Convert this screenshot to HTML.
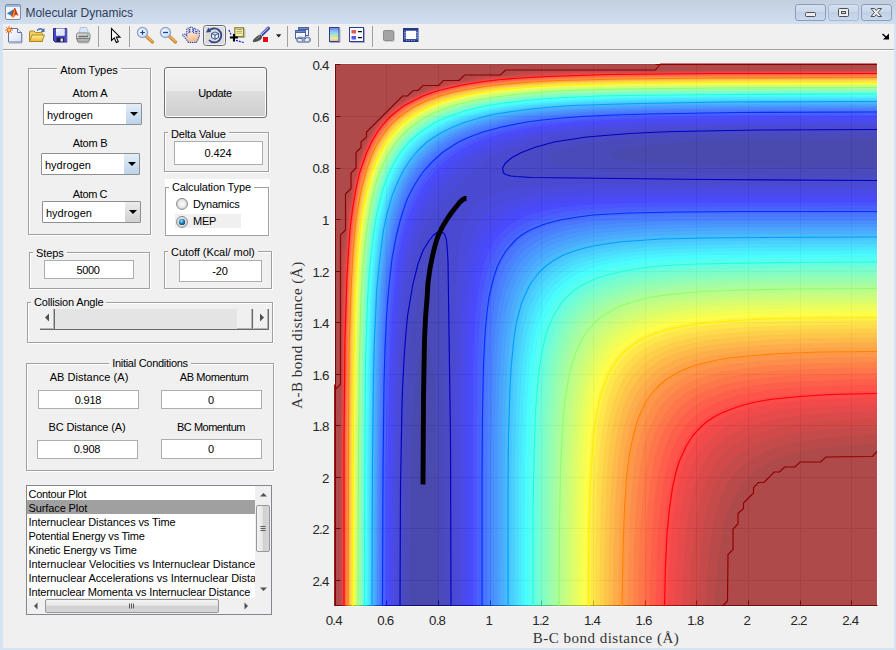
<!DOCTYPE html>
<html><head><meta charset="utf-8"><title>Molecular Dynamics</title>
<style>
html,body{margin:0;padding:0;}
body{width:896px;height:650px;overflow:hidden;background:#d6e3f3;position:relative;font-family:"Liberation Sans",sans-serif;font-size:11px;color:#000;}
.abs,.abs *{position:absolute;}
#win{position:absolute;left:0;top:0;width:896px;height:650px;overflow:hidden;}
#titlebar{position:absolute;left:0;top:0;width:896px;height:24px;background:linear-gradient(#c2cfdf,#d0def0);}
#title{position:absolute;left:25.5px;top:5px;font-size:12px;line-height:16px;color:#2f3d5c;white-space:nowrap;letter-spacing:-0.03px;}
#client{position:absolute;left:3px;top:24px;width:891px;height:624px;background:#f0f0f0;}
.t{position:absolute;white-space:nowrap;line-height:13px;height:13px;font-size:11px;}
.c{text-align:center;}
.panel{position:absolute;border:1px solid #a0a0a0;box-shadow:1px 1px 0 #fff, inset 1px 1px 0 #fff;box-sizing:border-box;}
.pt{position:absolute;background:#f0f0f0;padding:0 3px;white-space:nowrap;line-height:13px;height:13px;top:-8px;}
.edit{position:absolute;box-sizing:border-box;border:1px solid #abadb3;background:#fff;text-align:center;font-size:11px;}
.combo{position:absolute;box-sizing:border-box;border:1px solid #8e8f8f;background:#fff;border-radius:1px;}
.combo .cb{position:absolute;right:0;top:0;bottom:0;width:15px;background:linear-gradient(#e4eef8,#bcd3ea);}
.combo .cb.g{background:linear-gradient(#ececec,#d0d0d0);}
.combo .cb:after{content:"";position:absolute;left:3.5px;top:8px;border-left:4px solid transparent;border-right:4px solid transparent;border-top:4.5px solid #000;}
.combo span{position:absolute;left:3px;top:5px;line-height:13px;}
.sep{position:absolute;top:2px;width:1px;height:21px;background:#a0a0a0;}
</style></head><body>
<div id="win">
<div id="titlebar">
<svg style="position:absolute;left:4px;top:3px" width="18" height="18" viewBox="0 0 18 18">
<rect x="1.5" y="1.5" width="15" height="15" rx="1.5" fill="#f4f4f4" stroke="#7f8a9a"/>
<rect x="2" y="2" width="14" height="2" fill="#8fbce6"/>
<path d="M3 10.5 L9 6.5 L10.5 9 L7 12.5 Z" fill="#3a7bc0"/>
<path d="M7 12.5 L10.3 5 L11.2 5 L14.5 13 L12 11.5 L9.5 14.5 L8 14 Z" fill="#c8321e"/>
<path d="M8 14 L10.6 6 L11 9 L10.2 13.8 Z" fill="#f0a020"/>
</svg>
<div id="title">Molecular Dynamics</div>
<!-- window buttons -->
<svg style="position:absolute;left:794px;top:3px" width="100" height="19" viewBox="0 0 100 19">
<defs><linearGradient id="wb" x1="0" y1="0" x2="0" y2="1"><stop offset="0" stop-color="#d5e1f0"/><stop offset="0.45" stop-color="#cad8ea"/><stop offset="0.5" stop-color="#bfd0e6"/><stop offset="1" stop-color="#cbdaee"/></linearGradient></defs>
<rect x="1.5" y="1.5" width="30" height="16" rx="2.5" fill="url(#wb)" stroke="#8a9dbd"/>
<rect x="34.5" y="1.5" width="30" height="16" rx="2.5" fill="url(#wb)" stroke="#a9b9d2"/>
<rect x="67.5" y="1.5" width="30" height="16" rx="2.5" fill="url(#wb)" stroke="#8a9dbd"/>
<rect x="11.5" y="9.5" width="10" height="4" rx="1" fill="#ececec" stroke="#4d4f58"/>
<rect x="44.5" y="5.5" width="10" height="8" rx="1" fill="#ececec" stroke="#4d4f58"/>
<rect x="47.5" y="8.5" width="4" height="2" fill="#c8d6ea" stroke="#4d4f58"/>
<path d="M77 5.500h3.600l1.650 2 1.650-2h3.600l-3.400 4 3.400 4h-3.600l-1.650-2-1.650 2h-3.600l3.400-4z" fill="#f0f0f0" stroke="#4d4f58" stroke-width="1" stroke-linejoin="round"/>
</svg>
</div>
<div id="client">
<!-- toolbar -->
<div id="toolbar" style="position:absolute;left:0;top:0;width:891px;height:25px;border-bottom:1px solid #a0a0a0;box-shadow:0 1px 0 #fff;">
<svg style="position:absolute;left:-3px;top:-24px" width="896" height="52" viewBox="0 0 896 52">
<defs>
<linearGradient id="pg" x1="0" y1="0" x2="1" y2="1"><stop offset="0" stop-color="#ffffff"/><stop offset="1" stop-color="#d6e2f6"/></linearGradient>
<linearGradient id="fo" x1="0" y1="0" x2="0" y2="1"><stop offset="0" stop-color="#fff0a0"/><stop offset="1" stop-color="#e8b830"/></linearGradient>
<linearGradient id="cbar" x1="0" y1="0" x2="0" y2="1"><stop offset="0" stop-color="#6c7ce8"/><stop offset="0.35" stop-color="#8fd0f0"/><stop offset="0.6" stop-color="#b8e8b0"/><stop offset="0.8" stop-color="#f6e8a0"/><stop offset="1" stop-color="#f0a890"/></linearGradient>
<linearGradient id="lens" x1="0" y1="0" x2="1" y2="1"><stop offset="0" stop-color="#ffffff"/><stop offset="1" stop-color="#b8e4f4"/></linearGradient>
<linearGradient id="hnd" x1="0" y1="0" x2="0.3" y2="1"><stop offset="0" stop-color="#fff0e0"/><stop offset="0.6" stop-color="#fadcc0"/><stop offset="1" stop-color="#eebb90"/></linearGradient>
</defs>
<!-- new -->
<path d="M8.500 28.500h9l4 4v9.500h-13z" fill="url(#pg)" stroke="#6272a8" stroke-width="1"/>
<path d="M17.500 28.500v4h4" fill="#e8eefa" stroke="#6272a8" stroke-width="1"/>
<path d="M9 43h13v-9" fill="none" stroke="#9aa4c8" stroke-width="1"/>
<circle cx="9" cy="30" r="2.200" fill="#f08030"/>
<path d="M9 26v8M5 30h8M6.200 27.200l5.600 5.600M11.800 27.200l-5.600 5.600" stroke="#e86a28" stroke-width="1"/>
<circle cx="9" cy="30" r="1.200" fill="#ffd060"/>
<!-- open -->
<path d="M29.500 41.500v-9.500q0-1 1-1h3.500l1.500 1.500h6q1 0 1 1v8z" fill="#f0d060" stroke="#b08a20"/>
<path d="M29.500 41.500l2.500-6.500h12.500l-2.500 6.500z" fill="url(#fo)" stroke="#b08a20"/>
<path d="M37 30.500q3.500-3.500 6.500 0" fill="none" stroke="#4a6ab0" stroke-width="1.300"/>
<path d="M44.500 28v4h-4z" fill="#4a6ab0"/>
<!-- save -->
<path d="M53.500 28.500h13v13.500h-11.500l-1.500-1.500z" fill="#4a48c8" stroke="#2c2a80"/>
<rect x="56" y="28.500" width="8.500" height="7" fill="#f4f6fc"/>
<path d="M56 32l8.500-3.500v7h-8.500z" fill="#dfe6f6"/>
<rect x="56.500" y="37.500" width="7.500" height="4.500" fill="#1c1c50"/>
<rect x="60.500" y="38.500" width="2.500" height="3" fill="#d8d8e8"/>
<path d="M67 29v13.500h-12" fill="none" stroke="#8a88c8" stroke-width="1"/>
<!-- print -->
<path d="M79 33l1.500-5.500h6l2 5.500z" fill="#d6e8fa" stroke="#a8b8d0" stroke-width="0.800"/>
<path d="M76.500 34.500q0-1.500 1.500-1.500h10.500q1.500 0 1.500 1.500v4h-13.500z" fill="#d4d4d4" stroke="#8a8a8a"/>
<path d="M76.500 38.500h13.500l-1.500 3.500h-10.500z" fill="#b4b4b4" stroke="#808080"/>
<path d="M78.500 36.500h9.500" stroke="#707070" stroke-width="1.600"/>
<rect x="87" y="34.300" width="1.600" height="1.200" fill="#40c040"/>
<path d="M78.500 42.800h10" stroke="#a0a0a0"/>
<!-- seps -->
<path d="M98.500 26v21M129.500 26v21M287.500 26v21M318.500 26v21M372.500 26v21" stroke="#a0a0a0" stroke-width="1"/>
<!-- cursor -->
<path d="M111.500 28.500v12l2.800-2.600 2 4.600 2-0.900-2-4.500h3.700z" fill="#fff" stroke="#000" stroke-width="1.100" stroke-linejoin="miter"/>
<!-- zoom in -->
<path d="M146.500 36.500l6 5.500" stroke="#c88430" stroke-width="3.200" stroke-linecap="round"/>
<path d="M146.500 36.200l6 5.300" stroke="#f4b860" stroke-width="1.400" stroke-linecap="round"/>
<circle cx="142.500" cy="32.500" r="5" fill="url(#lens)" stroke="#96a2d4" stroke-width="1.400"/>
<path d="M140.200 32.500h4.600M142.500 30.200v4.600" stroke="#2a3a8a" stroke-width="1.200"/>
<!-- zoom out -->
<path d="M169.500 36.500l6 5.500" stroke="#c88430" stroke-width="3.200" stroke-linecap="round"/>
<path d="M169.500 36.200l6 5.300" stroke="#f4b860" stroke-width="1.400" stroke-linecap="round"/>
<circle cx="165.500" cy="32.500" r="5" fill="url(#lens)" stroke="#96a2d4" stroke-width="1.400"/>
<path d="M163 32.500h5" stroke="#2a3a8a" stroke-width="1.300"/>
<!-- hand -->
<path d="M188.500 42.500l-2.300-3.300-3.200-3.700q-0.500-1.300 0.800-1.600l1.600 0.400 1.400 1.400v-6.700q1.100-1.700 2.300 0v3.700h0.700v-4.900q1.500-1.800 3 0v4.900h0.700v-3.700q1.200-1.500 2.300 0v4.300h1v-2.500q1.300-1.500 2.500 0v5.500l-1.500 3.700-1.500 2.500z" fill="url(#hnd)" stroke="#2446c8" stroke-width="1.100" stroke-dasharray="1.400 0.800"/>
<!-- rotate button -->
<rect x="203.500" y="25.500" width="22" height="20" rx="3" fill="#dcdcdc" stroke="#6a6a6a"/>
<rect x="204.500" y="26.500" width="20" height="18" rx="2" fill="none" stroke="#f4f4f4" stroke-width="0.800"/>
<path d="M208.500 31.500a7 7 0 1 1 0.500 8.500" fill="none" stroke="#2c4684" stroke-width="1.800"/>
<path d="M206 32.500l2.500-5 2.500 4.500z" fill="#2c4684"/>
<path d="M211.500 33.500l3.500-1.500 3.500 1.500v4l-3.500 1.800-3.500-1.800z" fill="#e8eef8" stroke="#2c4684" stroke-width="0.900"/>
<path d="M211.500 33.500l3.500 1.500 3.500-1.500M215 35v4.300" fill="none" stroke="#2c4684" stroke-width="0.900"/>
<!-- data cursor -->
<path d="M228.900 30l2.600 5.600M236 40.400l8 2.200" fill="none" stroke="#1818f0" stroke-width="1.200" stroke-dasharray="2 1"/>
<path d="M244.800 28.500v9h-9.500" fill="none" stroke="#b0b0b0" stroke-width="1"/>
<rect x="234.800" y="27.800" width="8.700" height="8.700" fill="#fbf8c8" stroke="#8a8430" stroke-width="1.300"/>
<path d="M236.500 29.500h5.500M236.500 31.300h5.500M236.500 33.200h5.500" stroke="#a09a48" stroke-width="0.900"/>
<path d="M229.900 37.500h8M234 34v7.500" stroke="#000" stroke-width="2.100"/>
<!-- brush -->
<path d="M268.300 28.200l-7.400 7.400" stroke="#3a4ab0" stroke-width="3.400" stroke-linecap="round"/>
<path d="M267.900 27.900l-6.800 6.800" stroke="#dfe4fa" stroke-width="1" stroke-linecap="round"/>
<path d="M261.300 35.200l-1.300 1.300" stroke="#e8e8ee" stroke-width="3.600"/>
<path d="M260.600 35.300q1.800 1 1.200 2.500q-1.500 3.500-8.700 4q-0.300-1.800 2.400-4q2.600-2.800 5.100-2.500z" fill="#505050" stroke="#303030" stroke-width="0.500"/>
<path d="M256 39.500q2-2.500 4-3" fill="none" stroke="#a0a0a0" stroke-width="0.800"/>
<rect x="262.300" y="36.400" width="6.300" height="6" fill="#fff"/>
<rect x="263" y="37" width="5" height="5" fill="#f00010"/>
<path d="M276 34.200h5.400l-2.700 3.200z" fill="#202020"/>
<!-- link -->
<rect x="298.500" y="27.500" width="10" height="8" fill="#f4f7fc" stroke="#4a62a0"/>
<rect x="298.500" y="27.500" width="10" height="2" fill="#6c8cd0" stroke="#4a62a0"/>
<rect x="295.500" y="30.500" width="10" height="8" fill="#f4f7fc" stroke="#4a62a0"/>
<rect x="295.500" y="30.500" width="10" height="2" fill="#6c8cd0" stroke="#4a62a0"/>
<rect x="297" y="37.500" width="7.500" height="4.500" rx="2.200" fill="none" stroke="#5a6e98" stroke-width="1.600"/>
<rect x="302.500" y="37.500" width="7.500" height="4.500" rx="2.200" fill="none" stroke="#5a6e98" stroke-width="1.600"/>
<rect x="297" y="37.500" width="7.500" height="4.500" rx="2.200" fill="none" stroke="#c4d0e8" stroke-width="0.500"/>
<rect x="302.500" y="37.500" width="7.500" height="4.500" rx="2.200" fill="none" stroke="#c4d0e8" stroke-width="0.500"/>
<!-- colorbar -->
<rect x="329.500" y="27.500" width="9.500" height="14" fill="url(#cbar)" stroke="#2c3c90"/>
<path d="M340 28.500v14h-10" fill="none" stroke="#9098c0" stroke-width="0.800"/>
<!-- legend -->
<rect x="349.500" y="27.500" width="14" height="14" fill="#fbfcff" stroke="#2c3c90"/>
<path d="M364.500 28.500v14h-14" fill="none" stroke="#9098c0" stroke-width="0.800"/>
<rect x="351.500" y="30" width="4.500" height="3.500" fill="#e85858"/>
<rect x="351.500" y="36" width="4.500" height="3.500" fill="#5858e8"/>
<path d="M358 31.700h4M358 37.700h4" stroke="#101010" stroke-width="1.300"/>
<!-- grey square -->
<rect x="383.500" y="30.500" width="10" height="10" rx="1" fill="#a4a4a4" stroke="#8c8c8c"/>
<path d="M394.500 31.500v10h-10" fill="none" stroke="#c4c4c4" stroke-width="0.800"/>
<!-- film -->
<rect x="403.500" y="28.500" width="14.500" height="13" fill="#fdfdff" stroke="#223a8c"/>
<rect x="404" y="28.500" width="14" height="2.200" fill="#223a8c"/>
<rect x="404" y="39" width="14" height="2.500" fill="#223a8c"/>
<rect x="404" y="30" width="2" height="10" fill="#4058a8"/>
<rect x="416" y="30" width="2" height="10" fill="#4058a8"/>
<path d="M405 32v1.200M405 34.500v1.200M405 37v1.200M417 32v1.200M417 34.500v1.200M417 37v1.200M406 40.200h1.200M408.500 40.200h1.200M411 40.200h1.200M413.500 40.200h1.200" stroke="#e8ecf8" stroke-width="0.800"/>
<!-- arrow -->
<path d="M882.500 34l5 4.500" stroke="#000" stroke-width="1.500"/>
<path d="M889 33.500v6h-6z" fill="#000"/>
</svg>

</div>

</div>
<div id="ui" style="position:absolute;left:0;top:0;width:300px;height:650px;">
<!-- Atom Types -->
<div class="panel" style="left:28px;top:68px;width:123px;height:167px;"></div>
<div class="t c" style="left:57px;width:64px;top:64px;background:#f0f0f0;letter-spacing:-0.05px;">Atom Types</div>
<div class="t c" style="left:60px;width:60px;top:87px;letter-spacing:-0.05px;">Atom A</div>
<div class="combo" style="left:43px;top:103px;width:99px;height:22px;"><span>hydrogen</span><div class="cb"></div></div>
<div class="t c" style="left:60px;width:60px;top:137px;letter-spacing:-0.25px;">Atom B</div>
<div class="combo" style="left:41px;top:153px;width:99px;height:22px;"><span>hydrogen</span><div class="cb"></div></div>
<div class="t c" style="left:60px;width:60px;top:188px;letter-spacing:-0.40px;">Atom C</div>
<div class="combo" style="left:42px;top:201px;width:99px;height:22px;"><span>hydrogen</span><div class="cb g"></div></div>
<!-- Update -->
<div style="position:absolute;left:164px;top:67px;width:103px;height:51px;box-sizing:border-box;border:1px solid #707070;border-radius:3px;background:linear-gradient(#f2f2f2 0,#ebebeb 47%,#dddddd 47%,#cfcfcf 100%);box-shadow:inset 0 0 0 1px #fcfcfc;"></div>
<div class="t c" style="left:185px;width:60px;top:87px;letter-spacing:-0.33px;">Update</div>
<!-- Delta Value -->
<div class="panel" style="left:164px;top:132px;width:105px;height:40px;"></div>
<div class="t" style="left:168px;top:128px;background:#f0f0f0;padding:0 3px;letter-spacing:-0.13px;">Delta Value</div>
<div class="edit" style="left:174px;top:141px;width:89px;height:24px;"></div>
<div class="t c" style="left:188px;width:60px;top:147px;letter-spacing:-0.14px;">0.424</div>
<!-- Calculation Type -->
<div style="position:absolute;left:165px;top:179px;width:105px;height:57px;background:#fff;"></div>
<div class="panel" style="left:165px;top:187px;width:104px;height:49px;box-shadow:none;border-color:#a0a0a0;"></div>
<div class="t" style="left:169px;top:181px;background:#fff;padding:0 3px;letter-spacing:-0.14px;">Calculation Type</div>
<div style="position:absolute;left:175px;top:214px;width:66px;height:14px;background:#f0f0f0;"></div>
<svg style="position:absolute;left:175px;top:196px" width="16" height="34" viewBox="0 0 16 34">
<defs><radialGradient id="rb" cx="0.5" cy="0.5" r="0.5"><stop offset="0" stop-color="#fdfdfd"/><stop offset="0.6" stop-color="#ececec"/><stop offset="1" stop-color="#c9c9c9"/></radialGradient>
<radialGradient id="rd" cx="0.4" cy="0.35" r="0.7"><stop offset="0" stop-color="#b9e4f7"/><stop offset="0.45" stop-color="#2a8cc4"/><stop offset="1" stop-color="#0c3f6a"/></radialGradient></defs>
<circle cx="7" cy="7.9" r="5.5" fill="url(#rb)" stroke="#8e8f8f"/>
<circle cx="7" cy="25.900" r="5.5" fill="url(#rb)" stroke="#8e8f8f"/>
<circle cx="7" cy="25.900" r="3.2" fill="url(#rd)"/>
</svg>
<div class="t" style="left:193px;top:198px;letter-spacing:-0.22px;">Dynamics</div>
<div class="t" style="left:193px;top:215px;letter-spacing:-0.27px;">MEP</div>
<!-- Cutoff -->
<div class="panel" style="left:164px;top:251px;width:108px;height:38px;"></div>
<div class="t" style="left:168px;top:246px;background:#f0f0f0;padding:0 3px;letter-spacing:-0.06px;">Cutoff (Kcal/ mol)</div>
<div class="edit" style="left:179px;top:260px;width:83px;height:22px;"></div>
<div class="t c" style="left:190px;width:60px;top:265px;letter-spacing:-0.10px;">-20</div>
<!-- Steps -->
<div class="panel" style="left:29px;top:252px;width:121px;height:37px;"></div>
<div class="t" style="left:33px;top:247px;background:#f0f0f0;padding:0 3px;letter-spacing:-0.10px;">Steps</div>
<div class="edit" style="left:44px;top:260px;width:90px;height:19px;"></div>
<div class="t c" style="left:58px;width:60px;top:264px;letter-spacing:-0.38px;">5000</div>
<!-- Collision Angle -->
<div class="panel" style="left:27px;top:302px;width:246px;height:41px;"></div>
<div class="t" style="left:31px;top:296px;background:#f0f0f0;padding:0 3px;letter-spacing:-0.18px;">Collision Angle</div>
<div style="position:absolute;left:40px;top:309px;width:229px;height:20px;background:#e4e4e4;border-bottom:1px solid #696969;"></div>
<div style="position:absolute;left:40px;top:309px;width:15px;height:21px;background:#f0f0f0;box-shadow:inset -1px -1px 0 #696969,inset -2px -2px 0 #b4b4b4;"></div>
<div style="position:absolute;left:237px;top:309px;width:16px;height:21px;background:#f0f0f0;box-shadow:inset -1px -1px 0 #696969,inset -2px -2px 0 #b4b4b4;"></div>
<div style="position:absolute;left:254px;top:309px;width:15px;height:21px;background:#f0f0f0;box-shadow:inset -1px -1px 0 #696969,inset -2px -2px 0 #b4b4b4;"></div>
<svg style="position:absolute;left:40px;top:309px" width="230" height="21"><path d="M5 8.500 l4-4 v8z" fill="#505050"/><path d="M224 8.500 l-4-4 v8z" fill="#505050"/></svg>
<!-- Initial Conditions -->
<div class="panel" style="left:26px;top:363px;width:248px;height:108px;"></div>
<div class="t c" style="left:109px;width:82px;top:357px;background:#f0f0f0;letter-spacing:-0.28px;">Initial Conditions</div>
<div class="t c" style="left:39px;width:100px;top:371px;letter-spacing:0.03px;">AB Distance (A)</div>
<div class="edit" style="left:38px;top:390px;width:101px;height:19px;"></div>
<div class="t c" style="left:58px;width:60px;top:394px;letter-spacing:-0.18px;">0.918</div>
<div class="t c" style="left:37px;width:100px;top:421px;letter-spacing:-0.13px;">BC Distance (A)</div>
<div class="edit" style="left:37px;top:440px;width:101px;height:19px;"></div>
<div class="t c" style="left:57px;width:60px;top:443px;letter-spacing:-0.18px;">0.908</div>
<div class="t c" style="left:164px;width:100px;top:371px;letter-spacing:-0.38px;">AB Momentum</div>
<div class="edit" style="left:161px;top:390px;width:101px;height:19px;"></div>
<div class="t c" style="left:181px;width:60px;top:394px;">0</div>
<div class="t c" style="left:161px;width:100px;top:421px;letter-spacing:-0.49px;">BC Momentum</div>
<div class="edit" style="left:161px;top:439px;width:101px;height:20px;"></div>
<div class="t c" style="left:181px;width:60px;top:443px;">0</div>
<!-- Listbox -->
<div style="position:absolute;left:26px;top:485px;width:246px;height:130px;box-sizing:border-box;border:1px solid #828790;background:#fff;overflow:hidden;">
 <div style="position:absolute;left:0;top:0;width:228px;height:112px;overflow:hidden;">
  <div style="position:absolute;left:0;top:14px;width:228px;height:14px;background:#a0a0a0;"></div>
  <div class="t" style="left:1.5px;top:2px;letter-spacing:-0.29px;">Contour Plot</div>
  <div class="t" style="left:1.5px;top:16px;letter-spacing:-0.11px;">Surface Plot</div>
  <div class="t" style="left:1.5px;top:30px;letter-spacing:-0.11px;">Internuclear Distances vs Time</div>
  <div class="t" style="left:1.5px;top:44px;letter-spacing:-0.23px;">Potential Energy vs Time</div>
  <div class="t" style="left:1.5px;top:58px;letter-spacing:-0.17px;">Kinetic Energy vs Time</div>
  <div class="t" style="left:1.5px;top:72px;letter-spacing:-0.04px;">Internuclear Velocities vs Internuclear Distance</div>
  <div class="t" style="left:1.5px;top:86px;letter-spacing:-0.05px;">Internuclear Accelerations vs Internuclear Distance</div>
  <div class="t" style="left:1.5px;top:100px;letter-spacing:-0.14px;">Internuclear Momenta vs Internuclear Distance</div>
 </div>
 <!-- v scrollbar -->
 <div style="position:absolute;left:228px;top:0;width:16px;height:112px;background:#f0f0f0;"></div>
 <div style="position:absolute;left:229px;top:19px;width:14px;height:47px;box-sizing:border-box;border:1px solid #979797;border-radius:2px;background:linear-gradient(90deg,#f3f3f3,#e6e6e6 45%,#d0d0d0 50%,#d6d6d6);"></div>
 <svg style="position:absolute;left:228px;top:0" width="16" height="112"><path d="M5 10.500 l3.500-3.500 3.500 3.500z" fill="#505050"/><path d="M5 101.500 l3.500 3.500 3.500-3.500z" fill="#505050"/><path d="M5.500 40.500h5M5.500 42.500h5M5.500 44.500h5" stroke="#5a5a5a" stroke-width="1"/></svg>
 <!-- h scrollbar -->
 <div style="position:absolute;left:0;top:112px;width:244px;height:16px;background:#f0f0f0;"></div>
 <div style="position:absolute;left:18px;top:113px;width:174px;height:14px;box-sizing:border-box;border:1px solid #979797;border-radius:2px;background:linear-gradient(#f3f3f3,#e6e6e6 45%,#d0d0d0 50%,#d6d6d6);"></div>
 <svg style="position:absolute;left:0;top:112px" width="244" height="16"><path d="M10.500 4.500 l-3.500 3.500 3.500 3.500z" fill="#505050"/><path d="M217.500 4.500 l3.500 3.500 -3.500 3.500z" fill="#505050"/><path d="M102.500 5.500v5M104.500 5.500v5M106.500 5.500v5" stroke="#5a5a5a" stroke-width="1"/></svg>
</div>
</div>
<svg style="position:absolute;left:0;top:0" width="896" height="650" viewBox="0 0 896 650">
<rect x="334" y="63" width="544" height="544" fill="#fafafa"/>
<path d="M335.5 65v542M335 64.5h542M386.5 65v542M335 116.5h542M438.5 65v542M335 168.5h542M490.5 65v542M335 219.5h542M541.5 65v542M335 271.5h542M593.5 65v542M335 322.5h542M645.5 65v542M335 374.5h542M696.5 65v542M335 425.5h542M748.5 65v542M335 477.5h542M800.5 65v542M335 528.5h542M851.5 65v542M335 580.5h542" stroke="#dedede" stroke-width="1" fill="none"/>
<path d="M335.5 64v541.5h542M335.5 606v-5.5M335 64.5h5.5M386.5 606v-5.5M335 116.5h5.5M438.5 606v-5.5M335 168.5h5.5M490.5 606v-5.5M335 219.5h5.5M541.5 606v-5.5M335 271.5h5.5M593.5 606v-5.5M335 322.5h5.5M645.5 606v-5.5M335 374.5h5.5M696.5 606v-5.5M335 425.5h5.5M748.5 606v-5.5M335 477.5h5.5M800.5 606v-5.5M335 528.5h5.5M851.5 606v-5.5M335 580.5h5.5" stroke="#262626" stroke-width="1" fill="none"/>
<g opacity="0.7">
<rect x="335" y="64" width="542" height="542" fill="#00008f"/>
<path fill="#00009f" d="M335 64h542v74.5l-113 1.5l-46.5 1l-35.5 1l-26.5 2.5l-27.5 3l-18.5 5l1.5 5l18.5 3.5l14.5 2l6.5 0.5l41 1.5l46.5 1.5l139 1.5v438h-438.5l-0.5-77l-1-62l-1.5-46.5l-1.5-41l-0.5-6.5l-2-14l-3-19l-5.5-1.5l-5 19l-3 27l-2 26.5l-1.5 35.5l-1 46.5l-1 113h-74.5z"/>
<path fill="#0000af" d="M335 64h542v69.5l-144 1l-51.5 1.5l-36.5 1.5l-25.5 2l-25.5 2.5l-26.5 5.5l-14.5 5l-7 5l1 5.5l10.5 3.5l8.5 1.5l7 0.5l31 2.5l41 1.5l52 1l77 1l103 0.5v431h-431.5l-0.5-103l-1-77l-1-51.5l-1.5-41.5l-2-31l-1-7l-1.5-8.5l-3.5-10.5l-5-1l-5.5 7.5l-5 14.5l-5 26.5l-3 25l-2 26l-1.5 36l-1.5 51.5l-1 144h-69z"/>
<path fill="#0000bf" d="M335 64h542v65.5l-118.5 0.5l-82.5 1.5l-46.5 2l-42.5 3.5l-32.5 5l-19.5 5.5l-13.5 5l-9 5l-6.5 5.5l-3.5 5l1.5 5l1.5 1l5.5 1.5l5 1l15.5 1l170.5 2l175 1v425.5h-426l-1-175l-2-170l-1-15.5l-1-5.5l-1.5-5l-1-1.5l-5-1.5l-5 3.5l-5 6l-5.5 9.5l-5 13l-5 19.5l-5.5 32.5l-3.5 43l-2 46l-1.5 82.5l-0.5 118.5h-65z"/>
<path fill="#0000cf" d="M335 64h542v62l-123.5 0.5l-67 1l-36 1.5l-31 1.5l-24.5 1.5l-17 2l-24.5 3l-6.5 1.5l-17.5 3.5l-16.5 5.5l-12.5 5l-9.5 5l-7.5 5.5l-12.5 10l-27.5 27.5l-10 12.5l-5 7.5l-5.5 9.5l-5 12l-5 16.5l-5.5 24l-2.5 19.5l-2.5 22.5l-2 29l-1.5 36l-1.5 77.5l-1 139h-61.5zM519.5 188.5l12-1.5l15.5-1l20.5-1l26-0.5l283.5 1v420.5h-421l-1-283.5l0.5-25.5l1-20.5l1-15.5l2-15.5l3.5-15.5l3.5-10.5l3-5l3-5l5-5.5l2.5-2l5-3.5l5-2.5l5.5-2l10-3z"/>
<path fill="#0000df" d="M335 64h542v59.5l-133.5 0.5l-83 1.5l-46.5 2l-25.5 1.5l-27.5 3l-30.5 5l-19.5 5l-14 5.5l-11.5 5l-9 5l-7.5 5.5l-13 10l-12.5 12.5l-10 13l-5 7.5l-5.5 9l-5 11l-5 14.5l-5.5 19.5l-5 30.5l-3 27l-1.5 26l-2 46l-1.5 82.5l-0.5 134h-59zM539 194l13-1.5l21-1.5l46.5-1.5l257.5 0.5v416h-416l-1-206l0.5-62l0.5-25.5l1-20.5l2-21l2.5-15.5l4-15.5l4-10.5l3-5l3.5-5l4.5-5l4.5-4l5.5-3.5l5-3l10.5-4l15.5-4z"/>
<path fill="#0000ef" d="M335 64h542v57l-128.5 0.5l-72.5 1l-62 2l-31 2l-15.5 1.5l-25.5 3.5l-10.5 1.5l-17.5 4l-17 5l-12.5 5.5l-10.5 5l-9.5 6l-6 4.5l-6.5 5l-8.5 8l-10 12l-5 7l-5.5 8.5l-5 10l-5 13l-5.5 16.5l-5 23l-1.5 10.5l-3 25.5l-1.5 15.5l-1.5 31l-1.5 36l-1.5 77.5l-0.5 144h-56.5zM547 199l15.5-2l20.5-1.5l46.5-1l62-0.5l185.5 0.5v411.5h-412l-0.5-190.5l0.5-67l1-26l1-20.5l2-20.5l2.5-15.5l3.5-15.5l5-12l5-9l3.5-5l5-5l6.5-5l5.5-3.5l10.5-5l15.5-4.5z"/>
<path fill="#0000ff" d="M335 64h542v54.5l-133.5 0.5l-88 1.5l-35 1l-16.5 1l-26 2l-25 2.5l-32 5l-20.5 5l-14.5 5l-12 5.5l-9 5l-11 7.5l-9.5 8l-10 10.5l-7.5 10l-4 6l-5 9l-5 11.5l-5.5 15l-5 20.5l-5 31.5l-2.5 25l-2 26l-1 17l-1 34.5l-1.5 87.5l-0.5 134h-54zM622 199l69.5-1l185.5 0.5v407.5h-408v-195.5v-41.5l1-36l1.5-26l2-20.5l2-10l2-10.5l4.5-15.5l5-10.5l3.5-5l5-6.5l5-5l5.5-4l5-3l10-5l10.5-3.5l10.5-2.5l20.5-3l26-2.5z"/>
<path fill="#0010ff" d="M335 64h542v52.5l-128.5 0.5l-82.5 1l-36.5 1l-31 1.5l-18 1l-23 2.5l-23.5 3l-13 2l-13.5 3l-17.5 5l-13.5 5l-10.5 5.5l-9 5l-7 5l-6.5 5.5l-10 10l-5 6.5l-5.5 7l-4 7.5l-6 12l-5.5 13l-5 18l-5 24l-1.5 10l-2 21l-2 20.5l-1.5 31l-1.5 36l-1.5 87.5l-0.5 139h-52zM600.5 204l34.5-1l46.5-0.5h195.5v403.5h-404v-185.5v-41l1-31l1.5-31l2-20.5l3.5-20.5l4-15.5l4-10.5l3-5l3-5.5l4-5l5-5l6.5-5.5l5.5-3.5l5-2.5l5.5-2.5l10-3.5l15.5-3.5l21-3z"/>
<path fill="#0020ff" d="M335 64h542v50.5l-133.5 0.5l-88 1.5l-57 2l-43 3l-19 2.5l-17.5 3l-22.5 5l-16 5l-12 5l-9.5 5.5l-10 6.5l-10.5 8.5l-10 10.5l-7.5 10.5l-3 4.5l-5 10l-5.5 12l-5 16l-4.5 19.5l-3 15.5l-2.5 20.5l-3.5 41l-2 57l-1.5 87.5l-0.5 139h-50zM589 209.5l35.5-2l46.5-1l206-0.5v400h-400.5v-175l1-72l1.5-26l2-26l3-20.5l3.5-15.5l2.5-8l3.5-7.5l2.5-5l4.5-7l5-6.5l5.5-4.5l5-4l5-3l10.5-5l15.5-5l10.5-2l10-2z"/>
<path fill="#0030ff" d="M335 64h542v49l-133.5 0.5l-88 1l-58.5 2l-45 3.5l-15.5 1.5l-20.5 3.5l-10.5 2l-18.5 5l-14 5l-11.5 5l-9 5.5l-7.5 5l-6.5 5l-10 10.5l-8 10.5l-7.5 12.5l-5.5 11l-5 14.5l-5 18.5l-5.5 31l-2.5 26l-2 25.5l-2.5 57l-1 87.5l-0.5 144h-48.5zM581 214.5l17.5-2l15.5-0.5l52-2l67-0.5l144 0.5v396h-396.5v-164.5l1-72.5l1-31l2-20.5l2.5-20.5l3-15.5l5-15.5l5.5-12l6-8.5l5-5.5l5.5-5l9.5-6l9-4.5l6.5-2l15.5-4.5l10-1.5z"/>
<path fill="#0040ff" d="M335 64h542v47l-128.5 0.5l-88 1l-62 2l-30.5 2l-16 1.5l-20.5 2.5l-15.5 2.5l-19.5 4l-17.5 5l-13 5l-10.5 5l-12 8l-9.5 7.5l-5 5.5l-4.5 5l-6.5 8.5l-7 12l-3.5 7l-3.5 8.5l-3.5 10.5l-4 15.5l-4.5 21.5l-2.5 19.5l-2.5 26l-1 15.5l-1.5 31l-1 36l-1.5 87.5l-0.5 139h-46.5zM645.5 214.5l72-1h159.5v392.5h-393v-170l0.5-41l1-36l2-31l2.5-21l1.5-10l2-10.5l5-15.5l4.5-10l3-5.5l5-6.5l5-5.5l5-4.5l6-4l9.5-5l5.5-2l10-3.5l10.5-2.5l20.5-3.5l26-2.5z"/>
<path fill="#0050ff" d="M335 64h542v45.5l-139 0.5l-87.5 1l-57 2l-46 3.5l-21 2.5l-16 2.5l-22.5 5.5l-13.5 4l-14.5 6l-9.5 5l-8 5.5l-9 7l-8.5 8.5l-8 10l-4 6.5l-5 9l-5.5 13l-5 16l-4.5 17.5l-2.5 15.5l-3 20.5l-2 21l-1.5 25.5l-2 57l-1.5 87.5l-0.5 144h-45zM616 219.5l34.5-1.5l46.5-1h180v389h-389.5v-159.5l0.5-46.5l1-31l1.5-31l2-20.5l3.5-20.5l4-15.5l5.5-14l4-6.5l3.5-5.5l4-5l5.5-5l6.5-5.5l7.5-4l5.5-2.5l9-3.5l16.5-4.5l21-3.5z"/>
<path fill="#0060ff" d="M335 64h542v44l-139 0.5l-87.5 1l-57 2l-26 1.5l-25.5 2.5l-15.5 1.5l-21 3.5l-10 2.5l-15.5 4l-14 5l-11.5 5l-11 6.5l-5.5 4l-6.5 5l-8.5 8.5l-5 6.5l-4 5.5l-6.5 11l-5 11l-5 15l-5.5 20l-5 31l-2.5 25.5l-2 26l-1 20.5l-1 36l-1.5 88l-0.5 149h-43.5zM601.5 224.5l33.5-2l46.5-1.5l67-0.5h128.5v385.5h-386v-154.5l1.5-72l1-26l2-25.5l3-21l3.5-15l3-10.5l2-5l5.5-10.5l3.5-5.5l5-6.5l5.5-5l5-4l10.5-6l9-4l6.5-2l10-3l10.5-2z"/>
<path fill="#0070ff" d="M335 64h542v42.5l-139 0.5l-87.5 1.5l-36.5 0.5l-31 1.5l-15.5 1l-25.5 2l-23 3l-13.5 2.5l-13.5 2.5l-18.5 5.5l-13.5 5l-10.5 5l-11 7l-10 8.5l-5.5 5l-4.5 5.5l-7.5 10l-3.5 6l-4.5 9.5l-4 10.5l-3.5 10.5l-4 15l-4.5 24l-2 17.5l-2.5 20.5l-1 20.5l-1.5 31l-1 36.5l-1.5 87.5l-0.5 144h-42zM670.5 224.5l73-0.5h133.5v382h-382.5v-164.5l1-46.5l1-31l2.5-31l3-20.5l2-10.5l2.5-10l4-10.5l2-5l3.5-6.5l5-7.5l5.5-6l5-5l5-3.5l5.5-3.5l9-4.5l6.5-2l10-3.5l10.5-2l20.5-3.5l31-2.5z"/>
<path fill="#0080ff" d="M335 64h542v41.5l-139 0.5l-77.5 0.5l-62 2l-25.5 1l-26 2l-20.5 2.5l-18 2.5l-23.5 5l-10.5 3l-7 2.5l-8.5 3l-10 5l-12 7l-8.5 7.5l-8.5 8l-8 10.5l-4.5 6.5l-4.5 9l-5.5 13.5l-5.5 16.5l-3.5 16.5l-2.5 15.5l-3 20.5l-1.5 15.5l-2 31l-1 31l-1 36l-1 82.5l-0.5 144h-41zM632.5 230l33.5-1.5l46.5-1l164.5-0.5v379h-379v-149l0.5-41.5l1-36l2-31l2-20.5l4-21l4-15l4-10.5l2.5-5l3-5.5l4-5l4.5-5l5.5-5.5l7-5l5-3l5-2.5l10.5-4l10.5-3l10-2.5l21-3z"/>
<path fill="#008fff" d="M335 64h542v40l-149 0.5l-88 1l-57 2l-25.5 2l-21 1.5l-20.5 2.5l-16.5 3l-19.5 4.5l-10.5 3l-7 3l-13.5 6l-10.5 6l-5 3.5l-6.5 5l-9 9l-5 6.5l-3.5 5l-7 12l-5 11.5l-5.5 15.5l-4 17.5l-3 15.5l-3 24l-2 22.5l-2 26l-2 56.5l-1 88l-0.5 149h-39.5zM615 235l35.5-2.5l46.5-1.5l67-0.5h113v375.5h-376l0.5-149l0.5-41.5l1-31l2-31l2-20.5l3.5-20.5l4-15.5l4-10.5l2.5-5l6.5-10.5l4-5l5-5l5.5-4.5l5-3.5l10.5-5l6-2.5l9.5-3l10-2.5l10.5-2z"/>
<path fill="#009fff" d="M335 64h542v39l-144 0.5l-88 1l-59.5 1.5l-23 1.5l-26 2l-15.5 2l-25.5 4l-10.5 2.5l-15.5 4.5l-12 4.5l-11 5l-8 4.5l-5 3.5l-9.5 7.5l-5 5l-4.5 5l-7 9.5l-5 9l-5 11l-5.5 14l-5 18.5l-3.5 20.5l-2 15.5l-2.5 26l-2 25.5l-2 57l-1 93l-0.5 149h-38.5zM680 235l68.5-1h128.5v372h-372.5l0.5-154.5l0.5-42.5l1.5-34.5l2.5-31l3-21l2.5-10l2.5-10.5l3.5-10l2.5-5.5l3-5l5-7.5l5-6l5.5-5l5-4l10.5-6l5.5-2.5l10-3.5l10-3l10.5-2l20.5-3l31-2.5z"/>
<path fill="#00afff" d="M335 64h542v37.5l-144 0.5l-88 1l-67 2.5l-15.5 0.5l-26 2.5l-25 3l-11 1.5l-16 3.5l-18 5l-13.5 5.5l-10.5 5l-9 5.5l-6.5 4.5l-6 5.5l-8 9l-5 6.5l-3.5 5l-3 5l-4 9.5l-4.5 11.5l-6 20l-2.5 10.5l-2.5 16.5l-2.5 20l-2 20.5l-1.5 20.5l-1.5 31l-1 36l-1 88l-0.5 149h-37zM643 240l33-1.5l46.5-1l154.5-0.5v369h-369v-144l1-41.5l1-31l1.5-25.5l2.5-26l4-20.5l4.5-15.5l4-10l2.5-5.5l3-5l4-5l4.5-5.5l5.5-5l6-4.5l5.5-3l5-3l10.5-4l10-3l10.5-2.5l20.5-3z"/>
<path fill="#00bfff" d="M335 64h542v36.5l-149 0.5l-77.5 1l-67.5 2l-25.5 1.5l-21 1.5l-25.5 3l-15.5 2.5l-17.5 4l-16.5 5l-13 5.5l-10 5l-10 7l-10 8.5l-9 10l-7 10.5l-5 10l-5.5 12.5l-5 17l-4 17l-2.5 15.5l-3 26l-1.5 20.5l-1.5 26l-2.5 67l-0.5 77.5l-0.5 149h-36zM625.5 245.5l35-2.5l46.5-1.5l62-1h108v365.5h-366l0.5-144l1-41.5l1-31l1.5-25.5l2.5-20.5l3.5-21l4-15.5l2-5l4.5-10l6.5-10.5l4.5-5l4.5-5l5-4l5.5-3.5l10-5.5l7-3l8.5-2.5l10.5-2.5l10.5-2z"/>
<path fill="#00cfff" d="M335 64h542v35.5l-154.5 0.5l-87.5 1l-57 2l-46.5 3l-20.5 3l-16 2.5l-22.5 5l-13.5 4l-14 6.5l-9.5 5l-7.5 5l-10 8.5l-5 5.5l-5.5 6l-5 8l-5 9.5l-6.5 14l-4 13.5l-5 22l-3 16l-2.5 21l-3 46l-2 57l-1 87.5l-0.5 154.5h-35zM684.5 245.5l69-1.5h123.5v362h-362.5l0.5-149l1-43.5l1.5-34l3-31l3.5-20.5l4-15.5l3.5-9.5l3-6l2.5-5l5-7.5l5-6l5-5l5.5-4l5.5-3.5l10-5l5-2l10.5-3l10-2.5l21-3.5l31-3z"/>
<path fill="#00dfff" d="M335 64h542v34.5l-149 0.5l-88 1l-57 1.5l-25.5 1.5l-26 2l-20.5 2.5l-21 3.5l-15.5 3.5l-10 3l-12 4l-14 7l-10 6l-10.5 8.5l-9 9.5l-6.5 9.5l-5 8.5l-6 13l-4.5 13l-4.5 18l-3 15.5l-3 20.5l-2.5 26l-1.5 25.5l-1 20.5l-1 36.5l-1 92.5l-0.5 154.5h-34zM651.5 250.5l35-1.5l41.5-1l149-1v359h-359l0.5-139l0.5-41l1.5-31l1.5-26l2.5-20.5l4-20.5l4.5-15.5l3.5-10l3-5.5l3.5-5l3.5-5.5l4.5-5l5.5-5l6-4.5l5-3l6-3l9.5-4l10.5-3l10.5-2.5l20.5-3.5z"/>
<path fill="#00efff" d="M335 64h542v33.5h-149l-88 1l-67 2.5l-41.5 3l-21 2l-15 2.5l-14 3l-19 5l-14 5l-10.5 5.5l-9.5 5.5l-6 4.5l-6 5l-9 9.5l-7.5 11.5l-3 5l-5 10l-4 10.5l-3 10.5l-4 15.5l-4.5 25.5l-1.5 15.5l-3.5 43l-2 65.5l-1.5 87.5v154.5h-33zM635 255.5l15.5-1l20.5-1.5l41.5-1.5l61.5-0.5l103-0.5v355.5h-356l0.5-134l1-41l1-31l2-25.5l2-21l4-20.5l4-15.5l2-5l4.5-10l3-5.5l3.5-5l4.5-5.5l4.5-4l5-4.5l5-3.5l10.5-5.5l7.5-3l8-2.5l10.5-3l10-2z"/>
<path fill="#00ffff" d="M335 64h542v32.5h-149l-88 1l-62 2l-26.5 1.5l-20 1.5l-26 3l-15.5 3l-14 3l-18 5l-13 5l-10 5.5l-12 7.5l-9 7.5l-5 5.5l-4 5l-7 10.5l-6 11.5l-5 13l-5 17.5l-3 14.5l-3 15.5l-2.5 20.5l-2 25l-1.5 21.5l-2 67l-1 88l-0.5 149h-31.5zM689 255.5l69.5-1l118.5-0.5v352h-352.5l0.5-139l1-41l1.5-31l2-26l3-20.5l2-10.5l2.5-10l5.5-15.5l4.5-9.5l4-6l4-5l5-5.5l6-5l7-4.5l5-3l10.5-4.5l10-3.5l10.5-2.5l20.5-3.5l26-2.5z"/>
<path fill="#10ffef" d="M335 64h542v31.5h-149l-83 1l-67 2l-26 1.5l-20.5 1.5l-20.5 2.5l-21 3l-19.5 4.5l-16.5 5l-12.5 5l-9.5 5.5l-9 5.5l-5.5 4.5l-4.5 4.5l-5.5 5.5l-4.5 5.5l-5.5 9l-5.5 9.5l-5 12.5l-5 16.5l-4.5 19.5l-3 20.5l-2.5 21l-1.5 20.5l-1.5 25.5l-2 67.5l-1 82.5v149h-31zM660 261l31.5-2l41.5-1l56.5-0.5l87.5-0.5v349h-349l0.5-128.5l1-41.5l1-31l2-25.5l2.5-20.5l3.5-21l4.5-15.5l4-9l3-6.5l3.5-5l3.5-5l4.5-5l6-5.5l5.5-4l5-3l6-3l9.5-4l15.5-4.5l20.5-4l15.5-2z"/>
<path fill="#20ffdf" d="M335 64h542v30.5l-154.5 0.5l-93 1l-56.5 1.5l-26 2l-21.5 1.5l-20 2.5l-17 2.5l-22.5 5.5l-12 3.5l-15.5 6.5l-9.5 5.5l-7.5 5l-8.5 7.5l-8 8l-7 10l-6 10.5l-5 11.5l-5 16l-4.5 19l-3.5 20.5l-2.5 20l-2 21.5l-1.5 25.5l-1.5 57l-1.5 92.5v154.5h-30zM791 261l86-0.5v345.5h-345.5v-87.5l0.5-56.5l1.5-41.5l2-36l2-15.5l2-15.5l2-10l3-10.5l2.5-8l3-7.5l5.5-10.5l4-5l4-5l5.5-5l6.5-5.5l8.5-5l9.5-4.5l10.5-3.5l10-2.5l10.5-2l26-3.5l36-2.5l41.5-1.5z"/>
<path fill="#30ffcf" d="M335 64h542v29.5l-154.5 0.5l-87.5 1l-57 1.5l-26 1.5l-25.5 2l-21 2.5l-20.5 3l-15.5 3.5l-10.5 3l-12.5 4.5l-13 6l-10.5 6.5l-10 8l-5.5 5.5l-4 5l-6 8.5l-5.5 9l-6 13.5l-4 12.5l-5 18.5l-2.5 15l-3 21l-2.5 25.5l-1.5 26l-1 25.5l-1 31l-1 93l-0.5 159.5h-29zM697.5 266l66.5-1.5l113-0.5v342h-342.5l1-134l1-41l1.5-31l3-31l4-20.5l4-15.5l3-8.5l3.5-7l2.5-5l4.5-6.5l5-6l5.5-5l5-4l6.5-4.5l9-4.5l5-2l10.5-3.5l10.5-2.5l20.5-3.5l26-2.5z"/>
<path fill="#40ffbf" d="M335 64h542v28.5l-154.5 0.5l-87.5 1l-65 2l-43.5 3l-19.5 2l-22 3.5l-10.5 2l-17 5l-14 5l-11 5l-9.5 6l-6 4.5l-6 5l-8.5 9.5l-4.5 6l-3.5 5l-3 5.5l-4.5 9.5l-4 11l-3 10.5l-4 15.5l-3.5 20.5l-2.5 20.5l-2 20.5l-1.5 28l-2 60l-1 92.5l-0.5 154.5h-28zM671 271l31-1.5l41.5-1l51.5-1h82v338.5h-339l1-123.5l0.5-41l1.5-31l2.5-26l3.5-25.5l3.5-15.5l5-15.5l2.5-5.5l4.5-8l5-7l5-5.5l5.5-5l5-4l10.5-5.5l5-2.5l10-3.5l16-4.5l20.5-3z"/>
<path fill="#50ffaf" d="M335 64h542v27.5l-154.5 0.5l-87.5 1l-67.5 2l-20.5 1l-20.5 2l-26 3l-15.5 2.5l-13 2.5l-18.5 5.5l-13.5 5l-10 5l-12 8l-9 7.5l-5 5l-4 5.5l-7 10l-6 12l-5 13.5l-5.5 18l-2.5 13.5l-2.5 14.5l-2.5 21.5l-2.5 26l-1 20.5l-2 67l-1 87.5l-0.5 154.5h-27zM797.5 271h79.5v335h-335.5l0.5-87.5l0.5-56.5l2-41.5l2-31l3.5-25.5l2-10.5l3-10l2.5-7.5l3.5-8l5.5-10.5l3.5-5l4.5-5.5l5-5l7-5l8.5-5l9-4l10-3.5l10.5-3l10.5-2l25.5-3.5l36.5-2.5l41-1.5z"/>
<path fill="#60ff9f" d="M335 64h542v27h-149l-88 1l-67 2l-26 1.5l-20.5 1.5l-26 3l-15.5 2.5l-18 3.5l-17 5.5l-13 5l-10 5l-9 6l-5.5 4.5l-5 4.5l-5 5.5l-4.5 5.5l-6 9l-5 10l-5 13l-5.5 17l-3.5 18l-2.5 15.5l-3 25.5l-2 21l-1 25.5l-2 67l-1 88l-0.5 149h-26zM711 276.5l63-1.5l103-0.5v331.5h-332l0.5-77l0.5-51.5l1-36l1.5-31l3.5-31l3.5-20.5l4-15.5l3-8l3.5-7.5l7-11l5-6l5-5l5.5-4.5l7.5-4.5l8-4l5-2l10.5-3.5l10-3l21-3.5l25.5-2.5z"/>
<path fill="#70ff8f" d="M335 64h542v26l-154.5 0.5l-82.5 0.5l-62 2l-26 1l-25.5 2l-21 2l-19 3l-22 5l-10.5 3l-7.5 2.5l-8 3l-10 5l-11.5 7.5l-9.5 8l-7 7l-4 5.5l-4.5 7l-5 9.5l-6 14.5l-5 15.5l-4.5 20.5l-3 20.5l-2 20.5l-2 26l-1 25.5l-2 62l-0.5 82.5l-0.5 154.5h-25.5zM684.5 281.5l33-2l36-0.5l123.5-1v328h-328.5l1-123.5l1-36l1.5-31l2.5-26l3-20.5l3.5-15.5l5.5-15.5l5-10l3.5-5.5l4-5l4-5l5.5-4.5l5-4l10.5-6l5-2l10.5-4l15.5-4l20.5-3.5z"/>
<path fill="#80ff80" d="M335 64h542v25l-154.5 0.5l-93 1l-62 2l-46.5 3l-20.5 2.5l-19.5 3l-16.5 3.5l-10.5 3l-10.5 4l-15 7l-10.5 6l-10.5 8.5l-8.5 9l-7 10l-5 9l-5.5 12l-5 15.5l-5 21l-2.5 15l-2.5 22.5l-3.5 45l-2 61.5l-1 93l-0.5 159.5h-24.5zM670.5 286.5l31.5-2.5l41.5-1.5l51.5-0.5l82-0.5v324.5h-325l1-113l1-36l1-31l2.5-26l2.5-20.5l3-15.5l4.5-16l4.5-10l2.5-5l3-5l3.5-5.5l7.5-7.5l5-4.5l5-3.5l8.5-5l7-3l15.5-5.5l10.5-2.5l10.5-1.5z"/>
<path fill="#8fff70" d="M335 64h542v24.5l-154.5 0.5l-93 0.5l-56.5 2l-26 1l-26 2l-20.5 2.5l-20.5 3.5l-10.5 2l-15.5 4l-13.5 5l-12 5.5l-10.5 6l-5 4l-6 5l-4.5 4.5l-5 5.5l-5.5 7.5l-5 9l-5 11.5l-5 13.5l-3 10.5l-2.5 11.5l-3.5 19l-2.5 21l-2 25.5l-2 31l-1 31l-1 98l-0.5 175h-24zM733 286.5l56.5-1l87.5-0.5v321h-321v-72l1-51.5l1-36l2-31l2.5-26l4-20.5l4-15.5l4.5-10l3-6.5l5-8.5l5-6l5-5l5.5-4.5l10.5-6.5l9.5-4.5l6-2l10.5-3l10-2.5l21-3.5l31-2.5z"/>
<path fill="#9fff60" d="M335 64h542v23.5l-154.5 0.5l-93 1l-62.5 1.5l-46 3.5l-19 2l-22 3.5l-10.5 2l-18 4.5l-14 5.5l-11 5l-8.5 5l-7 5.5l-6 5l-7.5 8.5l-5.5 7l-5 8.5l-5 11l-5.5 14l-3.5 13l-2.5 10l-3.5 20.5l-2.5 21l-2 31l-1.5 25.5l-1 36l-1.5 98l-0.5 170h-23zM704 292l29-1.5l36-1l108-1v317.5h-317.5l1-113l1-36l1.5-31l2.5-26l3-20.5l4.5-17l5-14.5l5-10l3.5-5l7-8.5l5-5l5.5-4l5-3l10-5.5l16-5.5l10-2.5l10.5-2l20.5-3z"/>
<path fill="#afff50" d="M335 64h542v23h-154.5l-87.5 1l-67.5 2l-20.5 1l-26 2l-25.5 3l-15.5 2.5l-13 2.5l-18.5 5l-13.5 5.5l-12 5.5l-10 7l-9.5 8l-6 7l-6.5 8.5l-6 10l-5 10.5l-3.5 10.5l-4.5 15.5l-3 15.5l-2.5 15l-3 26l-2 26l-1.5 25.5l-1 36l-1.5 98v170h-22.5zM688.5 297l29-2l41-1.5l46.5-0.5l72-0.5v313.5h-314l1-108l1-36l1.5-31l2.5-26l3-20.5l3.5-15.5l2.5-7.5l3-8l2.5-5l5-9l4.5-6.5l4.5-5l5.5-5.5l6-4l10.5-6l5-2.5l10.5-3.5l15.5-4l15.5-3z"/>
<path fill="#bfff40" d="M335 64h542v22l-154.5 0.5l-87.5 1l-67.5 1.5l-29 1.5l-17.5 1.5l-25.5 3l-15.5 2.5l-17 3.5l-18 5l-13 5.5l-10 5l-9 6l-5.5 4.5l-5 4.5l-5.5 5.5l-5 6.5l-5.5 9l-5.5 10.5l-4.5 11.5l-4 14l-3.5 15.5l-3 15.5l-2.5 20.5l-2.5 27.5l-1.5 29.5l-1 36l-1.5 98l-0.5 175h-21.5zM776.5 297l100.5-1v310h-310l0.5-72l0.5-51.5l1.5-36l2.5-31l2-15.5l1.5-10.5l2.5-10l2.5-10.5l2.5-7.5l3.5-8l2.5-5l4.5-7l5-7l5.5-5l5-4.5l5-3.5l6.5-4l9-4l10.5-3.5l9.5-3l21.5-4l26-2.5l36-2.5z"/>
<path fill="#cfff30" d="M335 64h542v21.5h-149l-93 1l-67.5 2l-25.5 1l-21 1.5l-20.5 2.5l-20.5 3l-21 4.5l-15.5 4.5l-13.5 6l-10 5l-8 5l-9.5 8.5l-7 7l-7 10.5l-6 10l-4.5 10.5l-3.5 10.5l-3 10l-3.5 15.5l-2.5 15.5l-3.5 26l-1.5 20.5l-1.5 31l-1.5 41l-1.5 98l-0.5 170h-20.5zM733.5 302l56-1.5l87.5-0.5v306h-306.5l0.5-66.5l1-46.5l1-36l2-26l2.5-26l4-20.5l4-15.5l3-7l3.5-8.5l6.5-10.5l5.5-6l5-5l5-4l8-5.5l13-5.5l15.5-5l10-2.5l13-2.5l28.5-3z"/>
<path fill="#dfff20" d="M335 64h542v20.5l-154.5 0.5l-87.5 0.5l-67.5 2l-25.5 1.5l-24 1.5l-22.5 3l-17 2.5l-19.5 4l-15.5 4.5l-15 6.5l-10.5 5.5l-7.5 5l-8 7l-8 8.5l-7.5 10.5l-5 9.5l-5 11l-3.5 10.5l-3 10l-4 19.5l-2 11.5l-3 26l-2 20.5l-1.5 31l-1.5 41l-1 93l-0.5 175h-20zM714.5 307l29-1.5l30.5-0.5l103-1v302h-302.5l0.5-61.5l0.5-46.5l1.5-36l1.5-26l2-20.5l3.5-20.5l4.5-18l5-14l5-9.5l3-5l4-5l5-5.5l9-7l5-3.5l9.5-5l14-5l18-4.5l20.5-3z"/>
<path fill="#efff10" d="M335 64h542v20l-159.5 0.5l-93 0.5l-62 2l-46.5 3l-20.5 2.5l-21 3l-15.5 3.5l-10 3l-12.5 4l-13.5 6.5l-10 6l-10.5 8.5l-5 5l-4.5 5l-6 8.5l-5 9l-5.5 11.5l-4 12.5l-3 10l-3 14.5l-3 16.5l-2.5 20l-2 26.5l-1.5 31l-1.5 38.5l-1 95.5l-0.5 175h-19.5zM703.5 312.5l29.5-2l36-1.5l46.5-1l61.5-0.5v298.5h-298.5l0.5-61.5l0.5-41.5l1.5-36l1.5-25.5l2-21l3-20.5l3.5-15.5l2.5-7.5l3-8l2.5-5l5-9l4.5-6.5l4.5-5l6-5.5l5.5-4l10.5-6l5-2.5l10.5-3.5l15.5-4l15.5-3z"/>
<path fill="#ffff00" d="M335 64h542v19.5h-159.5l-93 1l-57 1.5l-25.5 1.5l-26 2l-20.5 2l-21 3.5l-10 2l-16 4l-14.5 5l-11 5.5l-10 6l-6 4l-6 5.5l-9 9.5l-5 7l-5 9l-5.5 11l-5 14.5l-4 16l-3 15.5l-2.5 15l-2 21l-2.5 31l-1.5 30.5l-1 31l-1 98l-0.5 170h-18.5zM798 312.5l79-1v294.5h-294.5l0.5-66.5l1-46.5l1.5-36l3-31l3-21l2-10l3-10.5l3.5-10l4-8.5l4-7l4-5.5l4-5l5.5-5l7-5.5l6.5-4l5-2.5l9-3.5l17.5-5.5l9.5-2l15.5-2.5l26-2.5l36-2z"/>
<path fill="#ffef00" d="M335 64h542v18.5l-159.5 0.5l-93 1l-62 1.5l-46.5 3l-19.5 2l-22 3.5l-10 2l-18.5 5l-14.5 5l-10.5 5.5l-8.5 5l-7 5l-6 5.5l-7.5 8l-5.5 7l-4.5 8.5l-6 12.5l-4.5 12l-5 19l-3 15.5l-2.5 15l-2.5 26l-1.5 26l-1.5 25.5l-1 36l-1 98l-0.5 170h-18zM759 317.5l46-1l72-0.5v290h-290.5l0.5-61.5l1-46.5l1.5-36l2-26l3-20.5l4-20.5l5.5-15.5l4.5-10.5l3-5l3.5-5l4.5-5.5l5-5l6.5-5l8-5.5l6-3l5.5-2l10-3.5l10.5-3l10.5-2l20.5-3l26-2.5z"/>
<path fill="#ffdf00" d="M335 64h542v18h-154.5l-93 1l-67 2l-20.5 1l-26 2l-25.5 2.5l-16 2.5l-15.5 3.5l-16 4.5l-13.5 5l-11.5 6l-10.5 6.5l-9.5 8.5l-6 6.5l-6.5 8.5l-6 10.5l-4.5 10.5l-4 10l-4.5 18l-5.5 28.5l-2.5 26l-2 25.5l-1.5 26l-1 36l-1.5 98v175h-17.5zM741.5 322.5l53.5-1.5l82-1v286h-286v-56.5l1-41l1.5-36.5l2-25.5l2-20.5l4-21l4-15.5l3.5-8.5l3-6.5l3-5.5l4.5-6l5-6l5-5l5.5-4.5l6.5-4l9-4.5l5-2l15.5-5l20.5-4.5l21-2.5z"/>
<path fill="#ffcf00" d="M335 64h542v17l-154.5 0.5l-93 1l-67 1.5l-26 1.5l-20.5 1.5l-26 3l-15.5 2.5l-16.5 3.5l-18 5l-13 5l-10 5.5l-9.5 6l-5.5 4l-4.5 4.5l-5.5 6l-7.5 10l-6 10.5l-4.5 10.5l-3.5 10l-4 14.5l-3.5 16.5l-2.5 15.5l-2.5 20.5l-2 26l-1.5 31l-1 36l-1.5 98l-0.5 175h-16.5zM732 328l26.5-1.5l31-1l87.5-1.5v282h-282l0.5-56.5l1-41l1-31l2-26l2.5-20.5l3.5-20.5l4-15.5l4-10.5l2.5-5l6-10.5l4-5l5-5l6-5.5l7.5-5l11-5.5l15.5-5.5l15.5-4l20.5-3z"/>
<path fill="#ffbf00" d="M335 64h542v16.5l-154.5 0.5l-93 0.5l-67 2l-26 1.5l-20.5 1.5l-20.5 2l-21 3l-20 4.5l-16 4.5l-13.5 5.5l-10 5.5l-8 5l-9.5 8.5l-7 7l-7 10l-6 10.5l-4.5 10.5l-3.5 10l-3 11l-4.5 20l-2.5 15.5l-2.5 26l-1.5 20.5l-2 31l-1 41l-1 98l-0.5 170h-16zM726.5 333l27-2l31-1l41.5-1l51-0.5v277.5h-277.5l0.5-51.5l0.5-41l1.5-31l1.5-25.5l2.5-21l3.5-20.5l4.5-15.5l5.5-14l3-6.5l3.5-5l4-5.5l4.5-5l5.5-5l5-4l10.5-6l14.5-5.5l16.5-4.5l20.5-4z"/>
<path fill="#ffaf00" d="M335 64h542v16h-159.5l-88 1l-62 1.5l-25.5 1.5l-26 1.5l-20.5 2.5l-20 2.5l-21.5 4.5l-10.5 3l-10 3.5l-10.5 4.5l-5 2.5l-5 3l-7.5 5l-8 7l-8 8.5l-7.5 10l-5.5 10.5l-4.5 10.5l-5 15.5l-2.5 10l-3.5 16.5l-2 14.5l-3 26l-1.5 20.5l-1.5 31l-1 41l-1.5 88v180h-15.5zM867 333h10v273h-273l0.5-61.5l1.5-46.5l2-36l3-26l4-20.5l3-10.5l4-10l2.5-6l5-9l4-5.5l4.5-5.5l6-5l6.5-5l9.5-5.5l6-2.5l10-4l10.5-2.5l20.5-4l26-3.5l36-2l41.5-1.5z"/>
<path fill="#ff9f00" d="M335 64h542v15.5h-159.5l-89 1l-66 1.5l-26 1.5l-25.5 2l-21 2.5l-19 2.5l-17 4l-10.5 2.5l-11 4l-14.5 6.5l-10.5 6.5l-10 8l-5 5l-4 5l-6.5 9l-5.5 9.5l-5 11.5l-5 16l-3 10.5l-2.5 12l-3 19l-2 19.5l-2 27l-1.5 31l-1.5 41l-1 93l-0.5 175h-14.5zM817.5 338l59.5-0.5v268.5h-268.5l0.5-56.5l1-41l2-36.5l3-25.5l2.5-15.5l2-9.5l4.5-16.5l5.5-13l4.5-7.5l4-5l4-5l5.5-5.5l7-5l6-4l5.5-2.5l9-4l17.5-5l9.5-2l15.5-2.5l26-2.5l30.5-2z"/>
<path fill="#ff8f00" d="M335 64h542v14.5l-164.5 0.5l-93 1l-62 2l-46.5 3l-21 2l-20.5 3l-15.5 3.5l-10.5 3l-13 4.5l-12.5 5.5l-10.5 6.5l-5 3.5l-6 5l-5 5.5l-4.5 5l-5 7.5l-5.5 9l-5 11.5l-5 15l-3.5 13.5l-3 15.5l-3 20.5l-2 21l-2 25.5l-1.5 31l-1 36l-1 98l-0.5 170h-14zM799.5 343.5l77.5-1.5v264h-264l0.5-51.5l1-41l2-31l2-25.5l3.5-21l2-10l3-10.5l2.5-8l3.5-7.5l2.5-5l4.5-7.5l5-6.5l5.5-5.5l5-4.5l5-3.5l6.5-3.5l9-4.5l15.5-5l10.5-2.5l10.5-2l20.5-2.5l31-2.5z"/>
<path fill="#ff8000" d="M335 64h542v14l-164.5 0.5l-93 1l-57 1.5l-26 1l-25.5 2l-21 2.5l-20.5 3l-10.5 2l-16.5 4.5l-14 5l-11.5 5l-9.5 6l-6.5 4.5l-5.5 5l-8.5 9l-5 7.5l-5.5 8.5l-5 11l-5 14.5l-4.5 16.5l-3 15.5l-3 20.5l-2.5 26l-1.5 26l-1 28l-1 33.5l-1 98l-0.5 170h-13.5zM792 348.5l39-1l46-0.5v259h-259l0.5-51.5l1-41l2-31l2.5-25.5l3.5-21l4-15.5l3.5-9.5l2.5-6l2.5-5l5-8.5l5.5-6.5l5-5l5-4.5l5.5-3.5l10-5.5l6-2.5l9.5-3.5l10.5-2.5l10.5-2.5l20.5-3l25.5-2.5z"/>
<path fill="#ff7000" d="M335 64h542v13.5l-159.5 0.5l-93 0.5l-66 2l-27 1.5l-20.5 1.5l-20 2l-21.5 3.5l-10.5 2l-19 5l-14 5l-10.5 5l-8 4.5l-5 4l-8.5 7l-7 8l-6 7.5l-6 10.5l-4.5 10l-4 12l-5.5 19l-2.5 15.5l-2.5 16.5l-2.5 25l-2 25.5l-1 26l-1 36l-1 98l-0.5 175h-13zM789.5 353.5l36.5-1l51-0.5v254h-254.5l1-51.5l1-36l1.5-25.5l2.5-26l3-20.5l3.5-15.5l5-15.5l4.5-10.5l3-5l4-5l4-5.5l5-5l5.5-4l10-6.5l10.5-5l5-2l15.5-4.5l21-3.5l25.5-3z"/>
<path fill="#ff6000" d="M335 64h542v13h-159.5l-93 1l-67 2l-21 1l-25.5 2l-25.5 2.5l-16 2.5l-15.5 3.5l-16.5 4.5l-13.5 5l-11 5.5l-10.5 7l-10 8l-5.5 6.5l-7 9l-5.5 10.5l-5 10l-3.5 10.5l-5 18l-3.5 18l-2 15.5l-2.5 26l-2 25.5l-2 62l-1.5 98v175h-12.5zM791.5 359l34.5-1.5l51-0.5v249h-249.5l1-46l1-39.5l2-27.5l2.5-26l3.5-20.5l4-15.5l3.5-10.5l2-5l5.5-10.5l3.5-5l4.5-5.5l5-5l5.5-4l10.5-6.5l9.5-4.5l6-2.5l15.5-4.5l20.5-3.5l25.5-3z"/>
<path fill="#ff5000" d="M335 64h542v12.5h-159.5l-93 1l-67 1.5l-23 1.5l-23.5 1.5l-26 3l-15.5 2.5l-16 3l-18.5 5.5l-13 5l-10 5l-9.5 6l-5.5 4.5l-5 4.5l-5 5.5l-4.5 5.5l-6 9.5l-5 10l-4.5 11.5l-6 20.5l-4 20.5l-2 15.5l-2.5 20.5l-2 26l-1 31l-1 36l-1.5 98l-0.5 175h-11.5zM796.5 364l34.5-1l46-1v244h-244l0.5-46l1.5-36l2-31l3-26l3.5-20.5l4.5-15.5l2.5-5.5l4.5-10l5.5-9l5-6.5l5.5-5l5-4.5l5.5-3.5l10-5.5l5.5-2.5l10-3.5l15.5-4l21-3l25.5-3z"/>
<path fill="#ff4000" d="M335 64h542v11.5l-159.5 0.5l-93 1l-67 1.5l-26 1.5l-20.5 1.5l-26 3l-15.5 2l-19 4l-17 5l-13.5 5.5l-10 5l-7.5 5.5l-10.5 8.5l-5 5.5l-5 6.5l-5.5 7.5l-5 10l-5 13l-5 16l-2.5 10l-3 17.5l-2 13.5l-2.5 26l-1.5 20.5l-1.5 31l-1 41l-1 98l-0.5 170h-11zM805.5 369l30.5-1l41-0.5v238.5h-238.5l0.5-46l1.5-36l2-26l2.5-25.5l4-21l4.5-15.5l2-5l5-10.5l5.5-8.5l5-6.5l5-5.5l5.5-4l5-3.5l10.5-5.5l5-2.5l10.5-3.5l15.5-4l20.5-3.5l25.5-2.5z"/>
<path fill="#ff3000" d="M335 64h542v11l-159.5 0.5l-93 1l-67 1.5l-26 1.5l-20.5 1.5l-21 2l-18 2.5l-18 3.5l-15.5 4l-8 3l-7.5 3l-10 5l-5.5 3l-6.5 4.5l-9 7l-7.5 8.5l-7 10l-6 10.5l-4.5 10l-5 15.5l-2.5 10.5l-3.5 18l-2.5 18l-2.5 26l-1.5 20.5l-1.5 31l-1 41l-1 98l-0.5 170h-10.5zM819 374.5l58-1.5v233h-233l1-46l1-31l2-26l3-25.5l3.5-20.5l4.5-15.5l2-5.5l5-10l6.5-10.5l4.5-5l4.5-4.5l5-4l5-4l5.5-3l10-4.5l15.5-5.5l21-4.5l20.5-2.5l25.5-2.5z"/>
<path fill="#ff2000" d="M335 64h542v10.5l-164.5 0.5l-88 0.5l-67 2l-48 3l-19.5 2l-21.5 3l-19.5 4l-10.5 3l-10 3.5l-10.5 4.5l-5 2.5l-10.5 6l-10.5 8.5l-8.5 9.5l-7 9.5l-5 9.5l-5 12l-5.5 16l-3.5 14.5l-2.5 15.5l-3 20.5l-1.5 21l-2 31l-2 67l-1 87.5l-0.5 175h-10zM841 379.5l36-1v227.5h-227.5l1-41l1.5-36l2.5-31l3-20.5l2-10.5l2.5-10l5-15.5l5-10.5l4-6.5l5.5-7l5-5l5-4.5l10.5-7l5-2.5l8.5-3.5l7-2.5l10.5-3l20.5-4l20.5-2.5l31-2z"/>
<path fill="#ff1000" d="M335 64h542v10l-164.5 0.5l-93 0.5l-62 2l-26 1l-26 2l-20.5 2.5l-20.5 3l-15.5 3.5l-10.5 2.5l-12 4.5l-13.5 6l-10.5 6.5l-10.5 8l-5 5l-4.5 5.5l-6 8l-5 9.5l-5 11.5l-5.5 15.5l-4 17l-2.5 15.5l-3 20.5l-2 21l-1.5 31l-2.5 67l-0.5 92.5l-0.5 170h-9.5zM773 389.5l22-2l20.5-1l61.5-2v221.5h-221.5l1-36l1-30.5l2-26l2.5-20.5l2.5-15.5l3.5-15.5l3-9.5l2.5-6l5-10.5l3-5l4-5l6-7l5.5-4.5l5-4l10.5-6l11-4.5l14.5-4.5l15.5-3z"/>
<path fill="#ff0000" d="M335 64h542v9.5l-164.5 0.5l-98.5 0.5l-62 2l-25.5 1.5l-26 2l-20.5 2.5l-19 3l-17.5 4l-10 3l-10.5 4l-10 4.5l-10.5 6.5l-5.5 4l-6 5l-9 10l-5.5 7l-5 9l-6.5 15l-4 11.5l-4.5 19.5l-3 15.5l-2.5 20.5l-2.5 26l-1.5 26l-2 61.5l-0.5 98l-0.5 170h-9zM788 395l38-2.5l51-1.5v215h-215.5l1-36l1.5-25.5l1.5-26l2.5-20.5l2.5-15.5l4-15.5l1.5-5.5l4-10l5-10l7-10.5l5-5l5-5l8-5.5l9.5-5l13.5-5.5l15.5-4l20.5-4z"/>
<path fill="#ef0000" d="M335 64h542v9l-164.5 0.5l-103.5 0.5l-26 1l-36 1l-46.5 3.5l-20.5 2.5l-21 3l-15.5 4l-10 3l-11 4l-11 5l-9 5.5l-7 5l-5.5 5l-8 8.5l-5.5 7l-5.5 10l-4.5 10l-2.5 5.5l-3.5 10.5l-5 20.5l-2.5 15.5l-2.5 20.5l-3.5 46.5l-1.5 36l-1 26l-0.5 103l-0.5 170h-8.5zM808.5 400l33-1.5l35.5-1v208.5h-209l1-36l2-30.5l1.5-21l3-20.5l3-15.5l4-15.5l4-9.5l2.5-6l6.5-10l4-5.5l5-5l8-6.5l10-6.5l10.5-4.5l15.5-5l15.5-3l20.5-3z"/>
<path fill="#df0000" d="M335 64h542v8.5l-164.5 0.5l-114 0.5l-25.5 1l-31 1.5l-46.5 3l-36.5 5.5l-15.5 3.5l-10 3l-13 5l-10.5 5l-7.5 4.5l-5 3.5l-9 7.5l-6.5 7.5l-6 8l-6 10l-3.5 8l-3 7.5l-3.5 10.5l-5 20.5l-5.5 36l-3 46.5l-1.5 31l-1 26l-1 113.5v164.5h-8zM840.5 405l36.5-1v202h-202l1-36l1.5-25.5l2.5-26l3-20.5l3.5-15.5l5-15.5l5-10l3-5.5l3.5-5l4-5l5.5-5l5-4.5l10-6l11-5.5l15-5l15.5-3.5l20.5-3l21-2z"/>
<path fill="#cf0000" d="M335 64h542v8l-164.5 0.5l-119 0.5l-36 1.5l-62 4l-10.5 1l-26 4.5l-5 1l-20.5 5.5l-14.5 5.5l-11.5 5.5l-10 6.5l-10 8.5l-5 5l-4 5.5l-6.5 10l-5.5 10.5l-4 10l-2 5.5l-5.5 20.5l-5.5 36l-4.5 62l-1.5 36l-1 118.5v170h-7.5zM800 415.5l36-3l41-1.5v195h-195l1-30.5l1.5-26l2-20.5l3-20.5l3-15.5l4.5-14l4.5-12l5.5-9.5l5.5-7l3.5-4l5.5-5l7-5.5l9.5-5l12-5l14-4.5l15.5-3z"/>
<path fill="#bf0000" d="M335 64h542v7.5l-164.5 0.5l-129.5 0.5l-36 1.5l-13.5 1l-43.5 3l-5 1l-8 1.5l-23 3.5l-5 1.5l-15.5 4l-15.5 6l-10.5 5l-10 6.5l-5.5 4l-5 5l-5.5 5.5l-4 5.5l-6.5 10l-5.5 10.5l-5.5 15.5l-4 15.5l-1.5 5l-3.5 23l-2 8l-0.5 5l-3 43l-1 14l-1.5 36l-1 129v164.5h-7zM830.5 420.5l46.5-2v187.5h-187.5l1-30.5l1.5-21l2-20.5l3-20.5l3.5-15.5l5-15.5l4.5-10.5l3-5l4.5-6.5l8-9l7.5-6l10.5-6.5l6-3l9-3.5l15.5-4.5l15.5-3l21-2.5z"/>
<path fill="#af0000" d="M335 64h542v7h-159.5l-144.5 1l-31 1l-10.5 1l-7 1l-39.5 3l-5 0.5l-7 2l-8.5 1.5l-10.5 1l-5 1l-3 1.5l-7.5 2l-5 1l-10.5 4l-5 1.5l-2.5 2l-8 3l-2 2l-13.5 9l-5 4.5l-6.5 7l-4 5.5l-5 8l-2 2l-3 8l-2 2.5l-1.5 5l-4 10.5l-1 5l-2 7.5l-1.5 3l-1 5l-1 10.5l-1.5 8.5l-2 7l-0.5 5l-3 39l-1 7.5l-1 10l-1 31l-1 144.5v159.5h-6.5zM809.5 431l32-3l35.5-1.5v179.5h-180l1.5-25.5l1.5-26l2.5-20.5l2.5-15.5l3.5-15.5l3.5-10l4.5-10.5l5.5-10.5l6-7.5l7.5-7.5l8-6l10-5.5l10.5-4.5l15.5-4.5l15.5-3.5z"/>
<path fill="#9f0000" d="M335 64h542v6.5l-283.5 1l-41.5 0.5l-20.5 0.5l-10.5 1.5l-4.5 1l-11 1l-25.5 1.5l-5.5 0.5l-5 2.5l-20.5 2.5l-5.5 2.5l-5 1.5l-5 0.5l-5 1.5l-2 1.5l-3.5 1.5l-5 1l-4 3l-6.5 2l-3.5 3l-6.5 3.5l-2 1.5l-3.5 2.5l-5 5l-8 8l-2.5 3.5l-1.5 2l-3.5 6.5l-3 3.5l-2 6.5l-3 4l-1 5l-1.5 3.5l-1.5 1.5l-1.5 5.5l-1 5l-1 5l-2.5 5.5l-2.5 20l-2.5 5.5l-0.5 5.5l-1.5 25.5l-1 11l-1 4.5l-1.5 10.5l-1 31l-1 159.5v154.5h-6zM847 436l30-1.5v171.5h-171.5l1.5-30l2-21.5l2.5-20.5l3-15.5l4.5-15.5l4-10l5.5-10.5l3.5-5l4-5.5l7.5-7l5-4l5-3.5l10.5-5.5l10-4l15.5-4l15.5-3.5l21-2.5z"/>
<path fill="#8f0000" d="M335 64h542v4.5l-77 0.5l-50.5 1l-192 1h-21l-15.5 1l-5 0.5l-5 1.5l-1.5 1l-35 1.5l-5 1l-4 3l-16.5 1l-5.5 1l-2.5 3l-2.5 0.5l-10 1l-4 3.5l-1.5 0.5l-5 0.5l-5 3l-1.5 1.5l-4 1l-5 4l-5 1.5l-10.5 10l-14 14.5l-1.5 5l-4 5l-1 4l-1.5 1l-3 5.5l-0.5 5l-0.5 1.5l-3.5 3.5l-1 10.5l-0.5 2.5l-3 2.5l-1 5.5l-1 16.5l-3 4l-1 5l-1 31l-0.5 4l-1 1l-1.5 5.5l-0.5 5l-1 20.5l-1 207.5l-1 50.5l-0.5 77h-4zM834 446.5l17.5-1.5l25.5-1.5v162.5h-162.5l1.5-25.5l1.5-18l2.5-18l2.5-15.5l4.5-15.5l4-10.5l5-10l7-10.5l5.5-6l5-4.5l5-4l10.5-6l10.5-4.5l10-3l11-3l15-2.5z"/>
</g>
<g fill="none" stroke-width="1.15">
<path stroke="#0000bf" d="M877 129.5l-118.5 0.5l-82.5 1.5l-15.5 0.5l-31 1.5l-43 3.5l-32.5 5l-19.5 5.5l-13 5l-9.5 5l-6.5 5.5l-3 5l1 5l2 1.5l5.5 1.5l5 0.5l15.5 1l175.5 2l170 1M451 606l-0.5-170l-2.5-175l-1-15.5l-0.5-5.5l-1.5-5l-1.5-2l-5-1.5l-5 3.5l-5 6.5l-5.5 9l-5 13.5l-5 19.5l-5.5 32.5l-2 22l-1.5 21l-1.5 30.5l-0.5 15.5l-1.5 82.5l-0.5 118.5"/>
<path stroke="#0030ff" d="M877 112l-139 0.5l-87.5 1.5l-36.5 1l-31 1.5l-20.5 1.5l-20.5 2l-15.5 2l-25 5l-18.5 5l-13.5 5l-11 5l-8.5 5.5l-7.5 5l-4 3.5l-7.5 7l-8 9l-5 7.5l-2.5 4l-3 5l-5 10l-4 11l-3 10l-4 15.5l-4.5 23.5l-2 18l-2 20.5l-1.5 20.5l-1.5 31l-1 36l-1 87.5l-0.5 134M482 606v-128.5l0.5-67l1-46.5l1-20.5l1-15.5l1.5-15.5l2-15.5l2.5-10.5l2.5-10l3.5-10.5l3-6l5-8.5l5.5-6.5l5-5.5l5-4l5.5-3.5l5-2.5l10.5-4.5l10-3l10.5-2.5l15.5-2.5l15.5-2l15.5-1l20.5-1l46.5-1l67.5-0.5h133.5"/>
<path stroke="#009fff" d="M877 101.5l-149 0.5l-88 1.5l-36 1l-31 1l-21 1.5l-20.5 2l-19.5 2.5l-16.5 2.5l-11 2.5l-20 6l-11.5 4.5l-9.5 4.5l-5 3l-5 3l-6.5 4.5l-9 8.5l-5 6l-5 6.5l-5.5 9l-5 10.5l-5.5 13.5l-5 18l-3.5 16l-1.5 11l-3 25l-2.5 26l-0.5 15l-1.5 31l-1 36.5l-1 87.5l-0.5 144M508 606v-108l0.5-62l1.5-46.5l1-20.5l1.5-15.5l1.5-15.5l2.5-15.5l2.5-10l3-10.5l4.5-10l2.5-5.5l3-5l4-5l4.5-5.5l5.5-5l7-5l9.5-5.5l10.5-4l10-3l10.5-2.5l15.5-2.5l15.5-2l15.5-1l20.5-1.5l46.5-1l62-0.5l108-0.5"/>
<path stroke="#20ffdf" d="M877 94l-154.5 0.5l-93 1l-31 0.5l-31 1.5l-25.5 1.5l-21 2l-20.5 2.5l-15.5 2.5l-20.5 5l-15.5 5.5l-12 5l-9 5.5l-10 7l-5 4.5l-4 3.5l-4.5 5.5l-4 5l-3 4.5l-3.5 6l-2.5 5l-4.5 10l-4 10.5l-2.5 10.5l-4 16l-3 20l-2.5 20.5l-2 21l-1.5 25.5l-1 31l-1 31l-0.5 87.5l-0.5 154.5M533 606v-92.5l1-56.5l1.5-46.5l2.5-31l2-15.5l2-12l3-14l3-10l4.5-10.5l5-8.5l4.5-7l4.5-5l6.5-5.5l6.5-5l9-4.5l10-4.5l10.5-3l10.5-2.5l10-2l15.5-2.5l15.5-1.5l15.5-1l21-1l25.5-0.5l62-1l92.5-0.5"/>
<path stroke="#8fff70" d="M877 87.5l-159.5 0.5l-93 1l-57 1.5l-25.5 1.5l-26 2.5l-20.5 2.5l-21 3.5l-15.5 3.5l-10 3l-11.5 4.5l-9 4l-5.5 3l-5 3.5l-7 5l-8.5 8l-5 5.5l-5 7l-5.5 9l-5 10.5l-5.5 14l-4.5 18l-2 10.5l-3.5 22l-2 19l-2 20.5l-1.5 26.5l-1.5 61.5l-1 92.5l-0.5 154.5M559 606l0.5-82l1-52l2-41l1-15.5l1.5-15.5l2.5-15.5l2-10l2.5-10.5l3.5-10.5l2.5-6l5-10l5.5-7.5l5-6l7-6.5l8-5l9.5-5.5l6.5-2.5l10.5-3l10-3l10.5-2l15.5-2l15.5-1.5l15.5-1.5l41.5-1.5l51.5-1l82-0.5"/>
<path stroke="#ffef00" d="M877 82.5h-159.5l-93 1l-36 1l-31 1l-26 1.5l-20.5 2l-17.5 1.5l-19 3l-15.5 3.5l-15.5 4l-13 5l-12.5 6.5l-6.5 4l-4 3l-5 4l-5 5l-7.5 8.5l-4 5l-4 7.5l-5.5 10.5l-5 14l-5 19l-2.5 11l-3 19l-2.5 22.5l-1.5 20.5l-1.5 26l-1 30.5l-0.5 36.5l-1 92.5l-0.5 154.5M588.5 606l0.5-66.5l1-46.5l2-36l1-15.5l2-15.5l1.5-10.5l2-11l2.5-9.5l3.5-10.5l4-10l3-5.5l3-5l3.5-5l4.5-5.5l6-5l6.5-5l9.5-5.5l6-2.5l10-4l10.5-2.5l10.5-2.5l15.5-2.5l15.5-1.5l15.5-1.5l36-2l46.5-1l66.5-0.5"/>
<path stroke="#ff8000" d="M877 77.5l-164.5 0.5l-93 1l-62 1.5l-26 1.5l-26 2l-20.5 2.5l-20.5 3.5l-10.5 2l-15.5 4.5l-12.5 4.5l-8 4l-5 2.5l-6 4l-4.5 3l-5 4l-5.5 5l-7 8.5l-3.5 5l-5 8l-5 10.5l-5 14.5l-5 18.5l-2 10.5l-3.5 20.5l-2 20.5l-1.5 21l-1.5 28l-2 64.5l-0.5 93l-0.5 159.5M622 606l1-56.5l1.5-41l2-31l3-24l2.5-12l2.5-10.5l3-10.5l2-5l4.5-10.5l3-5l3.5-5l5-6l5-5l5.5-4.5l8-5l7.5-4l10-4l8.5-2.5l12.5-3l10-2l10.5-1.5l15.5-1.5l31-2.5l41-1.5l56.5-0.5"/>
<path stroke="#ff0000" d="M877 73.5h-164.5l-103.5 1l-31 1l-31 1l-26 1.5l-20.5 1.5l-20.5 2.5l-20 3.5l-21.5 5l-10 3.5l-5.5 2l-10 5l-9.5 5l-7 5.5l-4.5 3.5l-5 5l-5 6l-4.5 6l-6 10l-5 11l-3.5 10l-3.5 10l-3.5 16l-3.5 20.5l-2.5 20.5l-1.5 20.5l-1.5 26l-1 30.5l-1 31l-1 103.5v164.5M664.5 606l1-41l1.5-31l2.5-25.5l3-21l3.5-15.5l3-10l2.5-5.5l4.5-10l3-5l3.5-5.5l4.5-5l5-5l5-4.5l5.5-3.5l5-3l10-4.5l5.5-2l10.5-3.5l10-2.5l10.5-2l10-1.5l26-2.5l31-2l46-1"/>
<path stroke="#8f0000" d="M877 64h-216.5l-5 6h-150l-5 5h-36l-5.5 5.5h-15.5l-5 5h-15.5l-5 5h-5l-5.5 5.5h-5l-36 36v5l-5.5 5v5.5l-5 5v15.5l-5 5v15.5l-5.5 5.5v36l-5 5v149.5l-5.5 5v5.5v211M722.5 606l5-5l0.5-46.5l5-5v-20.5l5-5v-10.5l5.5-5v-5.5l10-10v-5.5l5-5h5.5l10-10.5h5.5l5-5h10.5l5-5h20.5l5.5-5l46.5-0.5l4.5-5M655.5 64.5H877M334.7 384.6V606"/>
</g>
<path fill="none" stroke="#000" stroke-width="4.9" stroke-linejoin="round" d="M466.5 198.5h-1.5l-2 1l-3 2.5l-4 5l-4 5l-3.5 5l-3.5 5.5l-3 5l-4 8.5l-3 9.5l-2.5 10.5l-2.5 12.5l-2 14l-1 16.5l-1.5 19l-1 22.5l-1 57l-0.5 87"/>
<g font-family="Liberation Sans, sans-serif" font-size="13.3px" letter-spacing="-0.8" fill="#262626">
<text x="333.8" y="625" text-anchor="middle">0.4</text>
<text x="328.6" y="70.3" text-anchor="end">0.4</text>
<text x="385.4" y="625" text-anchor="middle">0.6</text>
<text x="328.6" y="121.9" text-anchor="end">0.6</text>
<text x="437.1" y="625" text-anchor="middle">0.8</text>
<text x="328.6" y="173.4" text-anchor="end">0.8</text>
<text x="488.7" y="625" text-anchor="middle">1</text>
<text x="328.6" y="225.0" text-anchor="end">1</text>
<text x="540.4" y="625" text-anchor="middle">1.2</text>
<text x="328.6" y="276.5" text-anchor="end">1.2</text>
<text x="592.0" y="625" text-anchor="middle">1.4</text>
<text x="328.6" y="328.1" text-anchor="end">1.4</text>
<text x="643.6" y="625" text-anchor="middle">1.6</text>
<text x="328.6" y="379.7" text-anchor="end">1.6</text>
<text x="695.3" y="625" text-anchor="middle">1.8</text>
<text x="328.6" y="431.2" text-anchor="end">1.8</text>
<text x="746.9" y="625" text-anchor="middle">2</text>
<text x="328.6" y="482.8" text-anchor="end">2</text>
<text x="798.6" y="625" text-anchor="middle">2.2</text>
<text x="328.6" y="534.3" text-anchor="end">2.2</text>
<text x="850.2" y="625" text-anchor="middle">2.4</text>
<text x="328.6" y="585.9" text-anchor="end">2.4</text>
</g>
<g font-family="Liberation Serif, serif" font-size="15px" fill="#333">
<text x="605.8" y="642.8" text-anchor="middle" textLength="146" lengthAdjust="spacing">B-C bond distance (Å)</text>
<text transform="translate(302.3 335.3) rotate(-90)" text-anchor="middle" textLength="147" lengthAdjust="spacing">A-B bond distance (Å)</text>
</g>
</svg>
</div>
</body></html>
